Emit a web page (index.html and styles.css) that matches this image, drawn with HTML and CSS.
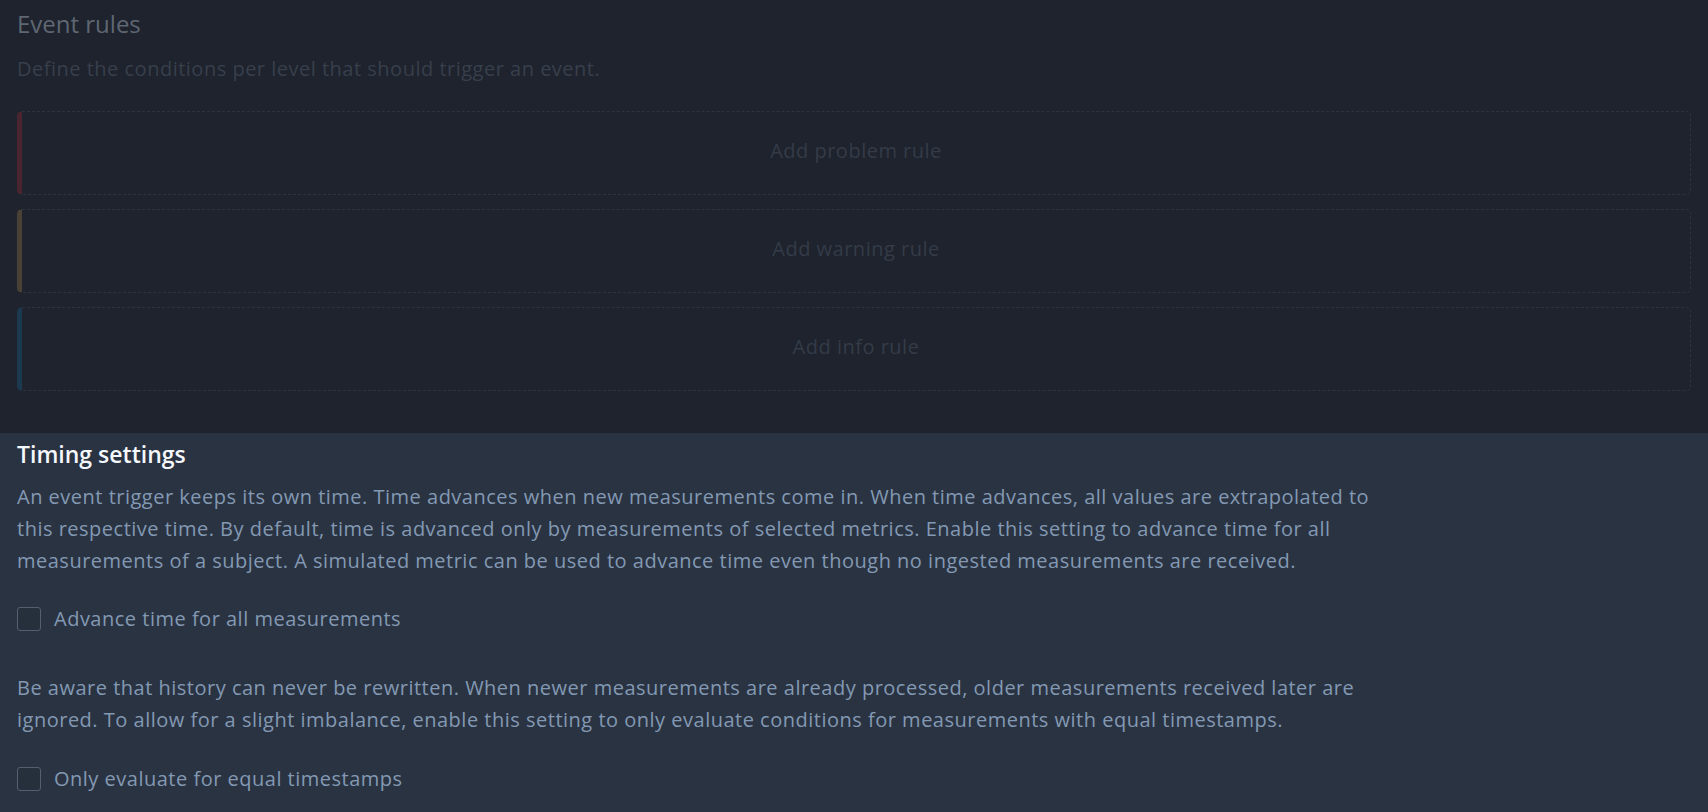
FILE: index.html
```
<!DOCTYPE html>
<html lang="en">
<head>
    <meta charset="UTF-8">
    <meta name="viewport" content="width=device-width, initial-scale=1.0">
    <title>Event trigger settings</title>
    <link rel="stylesheet" href="styles.css">
</head>
<body>
    <section class="rules">
        <h2 class="rules-title">Event rules</h2>
        <p class="rules-hint">Define the conditions per level that should trigger an event.</p>

        <div class="rule-slot rule-problem">Add problem rule</div>
        <div class="rule-slot rule-warning">Add warning rule</div>
        <div class="rule-slot rule-info">Add info rule</div>
    </section>

    <section class="timing">
        <h2 class="timing-title">Timing settings</h2>
        <p class="timing-text">An event trigger keeps its own time. Time advances when new measurements come in. When time advances, all values are extrapolated to this respective time. By default, time is advanced only by measurements of selected metrics. Enable this setting to advance time for all measurements of a subject. A simulated metric can be used to advance time even though no ingested measurements are received.</p>

        <label class="check-row">
            <input type="checkbox" class="check-box">
            <span>Advance time for all measurements</span>
        </label>

        <p class="timing-text second">Be aware that history can never be rewritten. When newer measurements are already processed, older measurements received later are ignored. To allow for a slight imbalance, enable this setting to only evaluate conditions for measurements with equal timestamps.</p>

        <label class="check-row">
            <input type="checkbox" class="check-box">
            <span>Only evaluate for equal timestamps</span>
        </label>
    </section>
</body>
</html>
```

FILE: styles.css
```
body {
    margin: 0;
    padding: 0;
    font-family: "Open Sans", "Noto Sans", sans-serif;
    font-size: 20px;
    letter-spacing: 0.5px;
    background-color: #2a3342;
    min-height: 812px;
}

/* Event rules (dimmed) */
.rules {
    background-color: #1e232d;
    padding: 9px 17px 42px;
}

.rules-title {
    margin: 0;
    font-size: 24px;
    font-weight: 500;
    letter-spacing: 0;
    line-height: 30px;
    color: #5f6773;
}

.rules-hint {
    margin: 14px 0 26px;
    line-height: 32px;
    color: #383f4c;
}

.rule-slot {
    display: flex;
    align-items: center;
    justify-content: center;
    box-sizing: border-box;
    height: 84px;
    padding-bottom: 5px;
    margin-bottom: 14px;
    border: 1px dashed #2d3440;
    border-left: 5px solid transparent;
    border-radius: 5px;
    color: #343b48;
}

.rule-slot:last-child { margin-bottom: 0; }
.rule-problem { border-left-color: #4a2530; }
.rule-warning { border-left-color: #4a4136; }
.rule-info { border-left-color: #1c3a4f; }

/* Timing settings */
.timing {
    padding: 6px 17px 20px;
}

.timing-title {
    margin: 0;
    font-size: 23px;
    font-weight: 600;
    letter-spacing: 0;
    line-height: 30px;
    color: #f4f7fb;
}

.timing-text {
    max-width: 1390px;
    margin: 12px 0 29px;
    line-height: 32px;
    color: #8399b3;
}

.timing-text.second {
    margin-top: 40px;
    margin-bottom: 30px;
}

.check-row {
    display: flex;
    align-items: center;
    gap: 13px;
    color: #8399b3;
    line-height: 26px;
    cursor: pointer;
}

.check-box {
    appearance: none;
    width: 24px;
    height: 24px;
    margin: 0;
    border: 1px solid #536070;
    border-radius: 3px;
    background: #26303d;
}
```
